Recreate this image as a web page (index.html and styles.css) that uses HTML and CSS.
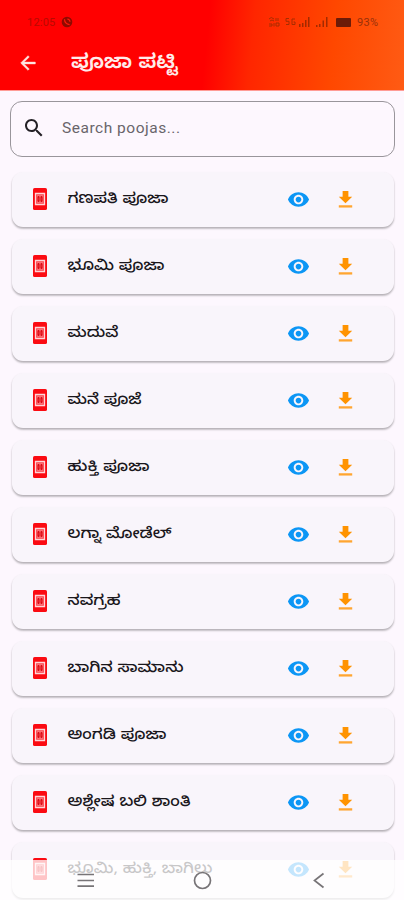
FILE: index.html
```
<!DOCTYPE html>
<html lang="kn">
<head>
<meta charset="utf-8">
<title>ಪೂಜಾ ಪಟ್ಟಿ</title>
<link rel="stylesheet" href="styles.css">
</head>
<body>
<svg width="0" height="0" class="defs">
  <symbol id="book" viewBox="0 0 14 22">
    <rect width="14" height="22" rx="1.6" fill="#fb0b12"/>
    <path d="M2 5H12V17H2Z" fill="#fb3f46"/>
    <path d="M2.500 5.500H11.500V16.500H2.500Z" fill="none" stroke="#ffd5d8" stroke-width="1.300"/>
    <path d="M4 8H10M4 14H10" stroke="#ff9ca2" stroke-width="1"/>
    <path d="M5.500 8V14M8.500 8V14" stroke="#d80d16" stroke-width="1.500"/>
    <path d="M4 11H10" stroke="#e8303a" stroke-width="1"/>
  </symbol>
  <symbol id="eye" viewBox="0 0 24 24"><path fill="#0c96f5" d="M12 4.500C7 4.500 2.730 7.610 1 12c1.730 4.390 6 7.500 11 7.500s9.270-3.110 11-7.500c-1.730-4.390-6-7.500-11-7.500zM12 17c-2.760 0-5-2.240-5-5s2.240-5 5-5 5 2.240 5 5-2.240 5-5 5zm0-8c-1.660 0-3 1.340-3 3s1.340 3 3 3 3-1.340 3-3-1.340-3-3-3z"/></symbol>
  <symbol id="down" viewBox="0 0 24 24"><path fill="#ff9300" d="M19 9h-4V3H9v6H5l7 7 7-7z"/><path fill="#ffa530" d="M5 18v2.400h14v-2.400H5z"/></symbol>
</svg>
<div class="screen">
  <header class="top">
    <div class="status">
      <span class="time">12:05</span>
      <svg class="call" viewBox="0 0 12 12"><circle cx="6" cy="6" r="5.300" fill="#8f0a00"/><path d="M3.500 3.200Q3.600 7.800 8.600 8.600M6.300 3Q8.800 3.300 9 5.700" fill="none" stroke="#ff1a0a" stroke-width="1.200"/></svg>
      <svg class="signals" viewBox="0 0 64 12">
        <g fill="none" stroke="#a82d00" stroke-width="1">
          <path d="M1 3Q3 0 6 3M2 5Q4 3 6 5M8 2V5M10 2V5M1 8H4V10H1M6 7V10.500M8 7H11V10H8Z"/>
          <path d="M21 2.500H18V5.300H21V8.500H18M27 3H24V8.500H27V6H25.500"/>
        </g>
        <path d="M31 8h1.500v3H31zM34 7h1.500v4H34zM37 4h1.500v7H37zM40 1h1.500v10H40zM48 9h1.500v2H48zM51 8h1.500v3H51zM54.500 4.500h1.500v6.500H54.500zM58 1h1.500v10H58z" fill="#a32a00"/>
      </svg>
      <span class="battery"></span>
      <span class="percent">93%</span>
    </div>
    <div class="bar">
      <svg class="back" viewBox="0 0 24 24"><path d="M20 11H7.830l5.590-5.590L12 4l-8 8 8 8 1.410-1.410L7.830 13H20v-2z" fill="#ffe4e0" stroke="#ffe4e0" stroke-width=".5"/></svg>
      <h1><svg class="heading"><text x="0" y="21" textLength="107" lengthAdjust="spacingAndGlyphs">ಪೂಜಾ ಪಟ್ಟಿ</text></svg></h1>
    </div>
  </header>
  <main>
    <div class="search">
      <svg viewBox="0 0 24 24"><path fill="#242126" d="M15.500 14h-.790l-.280-.270C15.410 12.590 16 11.110 16 9.500 16 5.910 13.090 3 9.500 3S3 5.910 3 9.500 5.910 16 9.500 16c1.610 0 3.090-.590 4.230-1.570l.270.280v.790l5 4.990L20.490 19l-4.990-5zm-6 0C7.010 14 5 11.990 5 9.500S7.010 5 9.500 5 14 7.010 14 9.500 11.990 14 9.500 14z"/></svg>
      <span>Search poojas...</span>
    </div>
    <div class="list" id="list"></div>
  </main>
  <nav class="nav">
    <svg viewBox="0 0 404 41" fill="none" stroke="#777477" stroke-width="1.700">
      <path d="M77.500 14.500H94M77.500 20.500H94M77.500 26.200H94"/>
      <circle cx="202.500" cy="20.500" r="8"/>
      <path d="M323.500 13.500L314.500 20.500L323.500 27.500"/>
    </svg>
  </nav>
</div>
<script src="rows.js"></script>
</body>
</html>
```
FILE: styles.css
```
body { margin: 0; background: #fdf7fe; }
.defs { position: absolute; }
.screen { position: relative; width: 404px; height: 900px; overflow: hidden; font-family: Roboto, sans-serif; }
.top { height: 90px; background: linear-gradient(96deg, #ff0000 0%, #ff0000 51%, #ff2600 62%, #ff4800 82%, #ff5b14 100%); border-bottom: 1px solid #ff9c96; display: flex; flex-direction: column; }
.status { height: 44px; display: flex; align-items: center; padding-left: 27px; color: #ad1500; font-size: 11px; box-sizing: border-box; }
.time { width: 28px; letter-spacing: .2px; color: #b80a00; }
.call { width: 12px; height: 12px; margin-left: 6px; }
.signals { width: 64px; height: 12px; margin-left: 195px; }
.battery { width: 15px; height: 9px; margin-left: 4px; border-radius: 1px; background: #6c1b08; }
.percent { margin-left: 6px; color: #98300a; font-size: 11px; letter-spacing: .3px; }
.bar { height: 42px; display: flex; align-items: center; padding-left: 17px; }
.back { width: 22px; height: 22px; margin-top: -4px; }
h1 { margin: -4px 0 0 32px; font-size: 20px; line-height: 1; font-weight: 600; }
.heading { display: block; width: 120px; height: 32px; overflow: visible; fill: #ffeceb; font-family: "Noto Sans Kannada", "Noto Sans", sans-serif; font-size: 20px; }
.search { box-sizing: border-box; width: 385px; height: 56px; margin: 10px 0 0 10px; border: 1px solid #99959b; border-radius: 12px; display: flex; align-items: center; padding: 0 0 2px 11px; color: #69656b; font-size: 15.500px; letter-spacing: .520px; }
.search svg { width: 24px; height: 24px; margin-right: 16px; }
.list { display: flex; flex-direction: column; gap: 12px; margin: 15px 10px 0 12px; }
.card { height: 55.050px; flex: none; border-radius: 11px; background: #f9f5fb; box-shadow: 0 2px 2px rgba(0,0,0,.200), 0 1px 2px rgba(0,0,0,.120); display: flex; align-items: center; padding-left: 21px; }
.book { width: 14px; height: 22px; margin-top: -1px; }
.name { width: 219px; height: 32px; margin: 0 0 4px 14px; overflow: visible; fill: #1a171c; font-family: "Noto Sans Kannada", "Noto Sans", sans-serif; font-size: 15px; font-weight: 500; }
.eye { width: 23px; height: 23px; margin-left: 7px; }
.down { width: 23px; height: 23px; margin-left: 24px; }
.nav { position: absolute; left: 0; bottom: 0; width: 404px; height: 40px; background: rgba(255,255,255,.760); }
.nav svg { display: block; width: 404px; height: 41px; }
```
FILE: rows.js
```
const rows = [
  ["ಗಣಪತಿ ಪೂಜಾ", 101], ["ಭೂಮಿ ಪೂಜಾ", 97], ["ಮದುವೆ", 51], ["ಮನೆ ಪೂಜೆ", 74],
  ["ಹುಕ್ತಿ ಪೂಜಾ", 82], ["ಲಗ್ನಾ ಮೋಡೆಲ್", 104], ["ನವಗ್ರಹ", 53], ["ಬಾಗಿನ ಸಾಮಾನು", 116],
  ["ಅಂಗಡಿ ಪೂಜಾ", 99], ["ಅಶ್ಲೇಷ ಬಲಿ ಶಾಂತಿ", 123], ["ಭೂಮಿ, ಹುಕ್ತಿ, ಬಾಗಿಲು", 145]
];
document.getElementById("list").innerHTML = rows.map(([name, width]) => `
  <div class="card">
    <svg class="book"><use href="#book"/></svg>
    <svg class="name"><text x="6.500" y="21" textLength="${width}" lengthAdjust="spacingAndGlyphs">${name}</text></svg>
    <svg class="eye"><use href="#eye"/></svg>
    <svg class="down"><use href="#down"/></svg>
  </div>`).join("");
```
